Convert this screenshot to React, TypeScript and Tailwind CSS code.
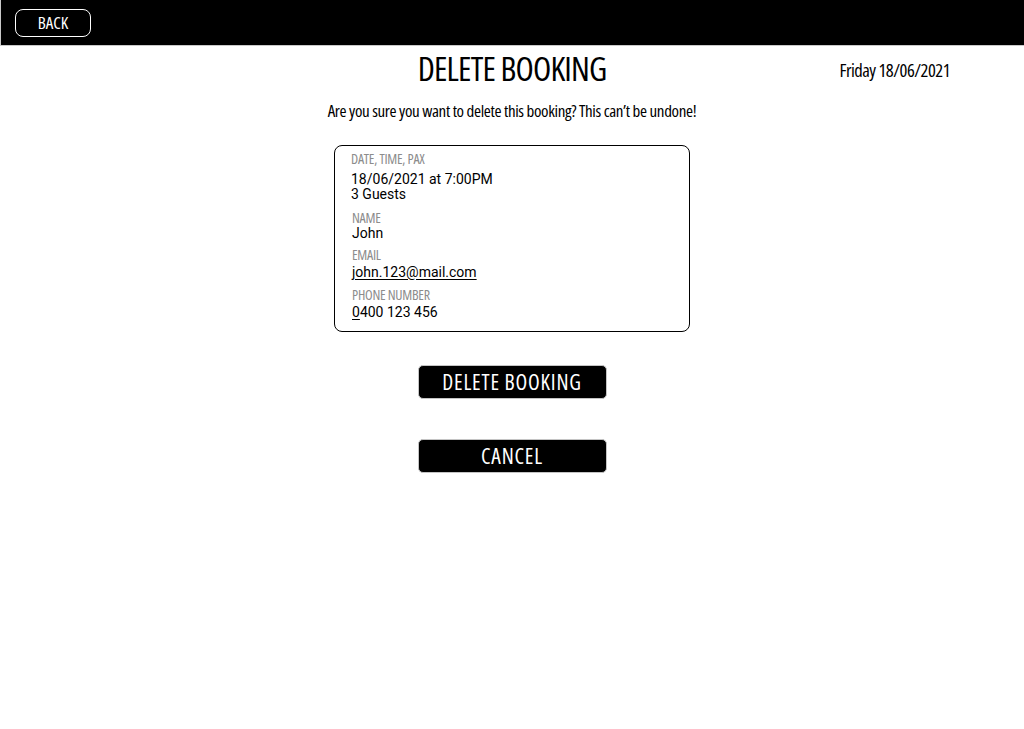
const cond = "font-['Open_Sans',sans-serif] [font-stretch:75%]";
const roboto = "font-['Roboto',sans-serif] text-[14px] leading-[15px] text-black";

function Label({ text, className = '' }: { text: string; className?: string }) {
  return <div className={`${cond} text-[14px] leading-[16px] tracking-[-0.25px] text-[#8c8c8c] ${className}`}>{text}</div>;
}

export default function App() {
  return (
    <div className="w-[1024px] h-[729px] bg-white">
      <div className="h-[46px] bg-black border-l border-b border-[#c9c9c9] flex items-center pl-[14px]">
        <button className={`${cond} font-medium w-[76px] h-[28px] rounded-[8px] border-[1.5px] border-white text-white text-[17px] leading-none flex items-center justify-center`}>
          BACK
        </button>
      </div>

      <div className="relative mt-[2px]">
        <h1 className={`${cond} font-medium text-center text-[33.5px] leading-[40px] tracking-[-0.8px] text-black`}>DELETE BOOKING</h1>
        <div className={`${cond} font-medium absolute right-[74px] top-[10px] text-[18.5px] leading-[24px] tracking-[-0.5px] text-black`}>
          Friday 18/06/2021
        </div>
      </div>

      <p className={`${cond} font-medium text-center text-[17px] leading-[20px] mt-[13px] tracking-[-0.35px] text-black`}>
        Are you sure you want to delete this booking? This can’t be undone!
      </p>

      <div className="mx-auto mt-[24px] w-[356px] h-[187px] border border-black rounded-[8px] pl-[16px] pt-[5px]">
        <Label text="DATE, TIME, PAX" />
        <div className={`${roboto} mt-[5px]`}>18/06/2021 at 7:00PM</div>
        <div className={roboto}>3 Guests</div>

        <Label text="NAME" className="mt-[8px] pl-px" />
        <div className={`${roboto} pl-px`}>John</div>

        <Label text="EMAIL" className="mt-[6px] pl-px" />
        <div className={`${roboto} mt-[2px] pl-px`}>
          <span className="underline underline-offset-2">john.123@mail.com</span>
        </div>

        <Label text="PHONE NUMBER" className="mt-[7px] pl-px" />
        <div className={`${roboto} mt-[2px] pl-px`}>
          <span className="underline underline-offset-2">0</span>400 123 456
        </div>
      </div>

      <div className="flex flex-col items-center gap-[40px] mt-[33px]">
        <button className={`${cond} font-medium w-[189px] h-[34px] bg-black text-white rounded-[5px] border border-[#c4c4c4] text-[21.5px] leading-none tracking-[0.8px] flex items-center justify-center`}>
          DELETE BOOKING
        </button>
        <button className={`${cond} font-medium w-[189px] h-[34px] bg-black text-white rounded-[5px] border border-[#c4c4c4] text-[21.5px] leading-none tracking-[0.8px] flex items-center justify-center`}>
          CANCEL
        </button>
      </div>
    </div>
  );
}
